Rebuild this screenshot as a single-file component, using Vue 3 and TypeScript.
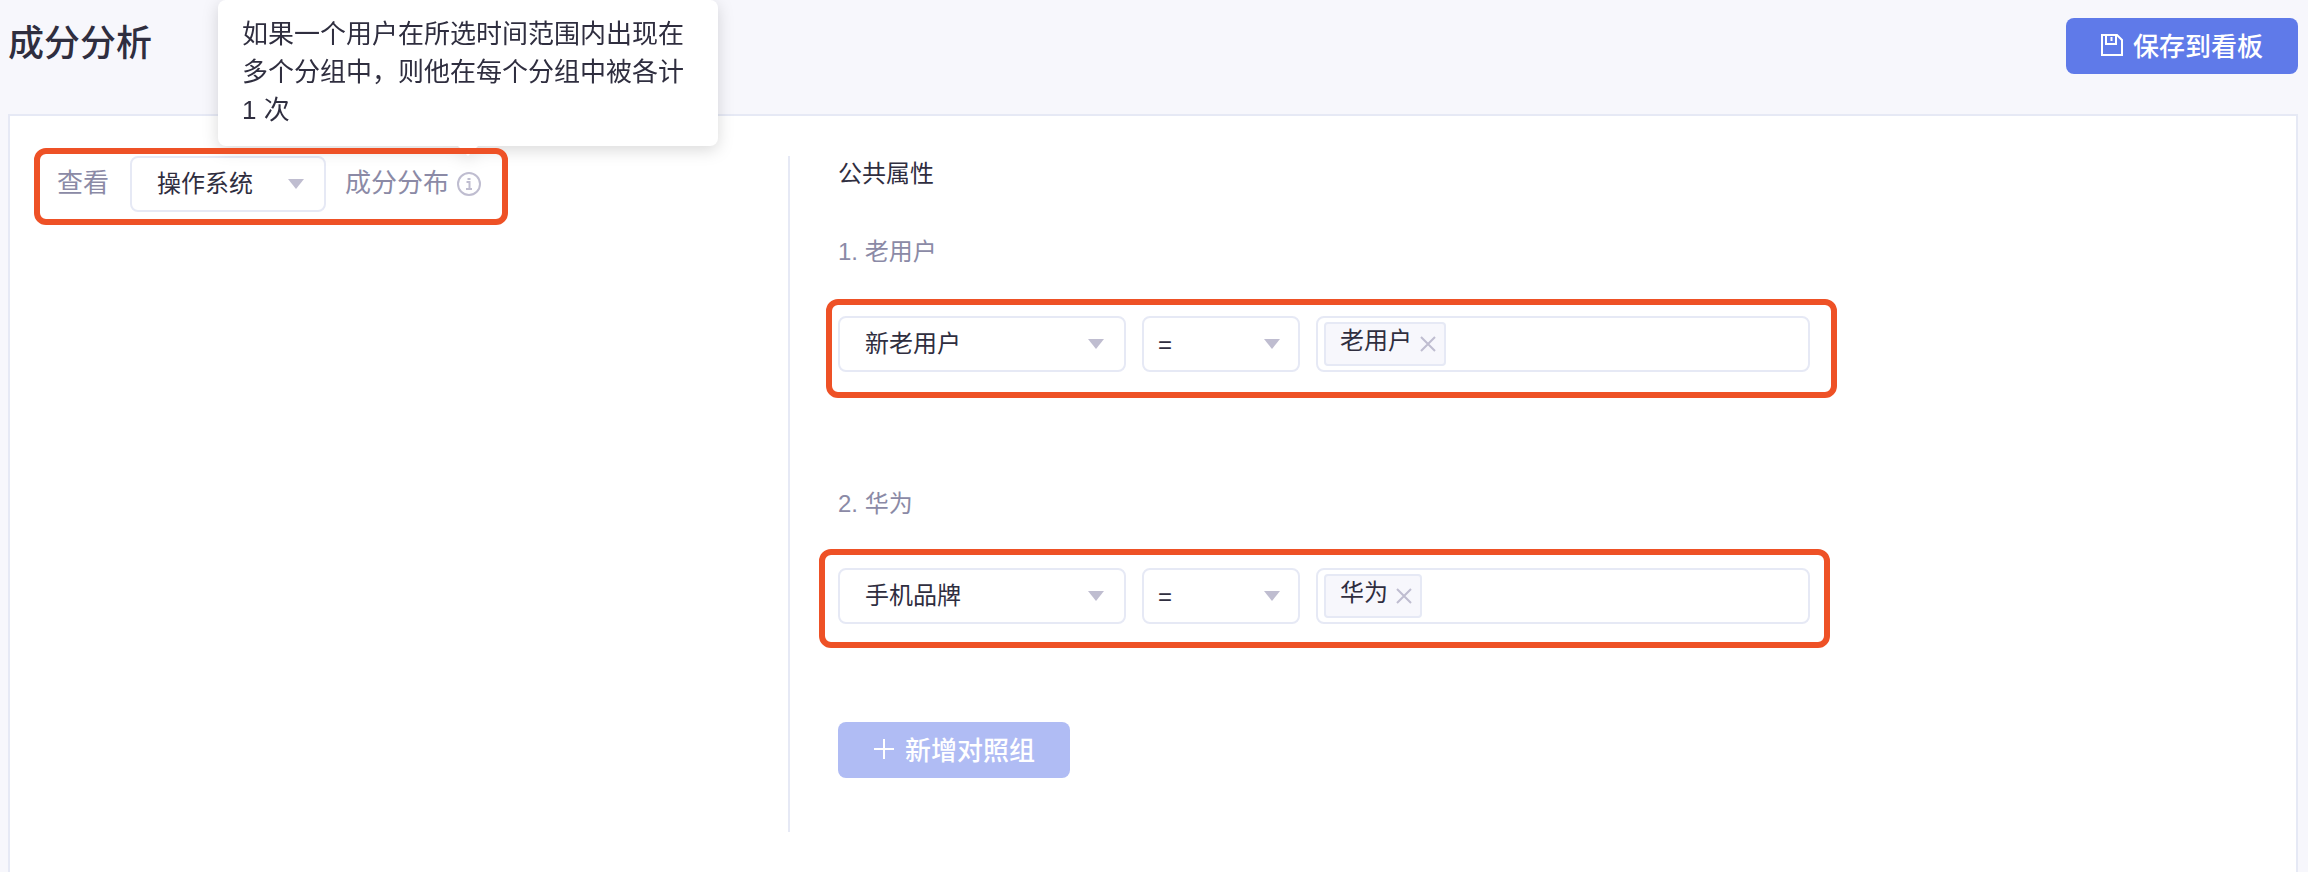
<script setup lang="ts">
import { ref } from 'vue'

interface Rule {
  id: number
  name: string
  field: string
  fields: string[]
  operator: string
  values: string[]
}

const dimension = ref('操作系统')
const dimensions = ['操作系统', '手机品牌', '新老用户']
const operators = ['=', '≠']

const rules = ref<Rule[]>([
  { id: 1, name: '老用户', field: '新老用户', fields: ['新老用户', '手机品牌'], operator: '=', values: ['老用户'] },
  { id: 2, name: '华为', field: '手机品牌', fields: ['新老用户', '手机品牌'], operator: '=', values: ['华为'] },
])

function removeValue(rule: Rule, value: string) {
  rule.values = rule.values.filter((v) => v !== value)
}
</script>

<template>
  <div class="page">
    <header class="header">
      <h1 class="title">成分分析</h1>
      <button type="button" class="btn">
        <svg class="save-icon" viewBox="0 0 22 22" aria-hidden="true">
          <path d="M1 1H16L21 6V21H1Z M5 1V10H15V1 M10.500 3V7" />
        </svg>
        <span class="btn-text">保存到看板</span>
      </button>
    </header>

    <main class="panel">
      <section class="view">
        <div class="view-row mark mark-view">
          <label class="view-text" for="dimension">查看</label>
          <span class="select view-select">
            <select id="dimension" v-model="dimension">
              <option v-for="d in dimensions" :key="d">{{ d }}</option>
            </select>
          </span>
          <span class="view-text">成分分布</span>
          <span class="info" aria-describedby="count-tip">
            <svg viewBox="0 0 24 24" aria-hidden="true">
              <circle cx="12" cy="12" r="11" />
              <path d="M9.500 10H12.500V17 M9 17H15" />
              <rect x="10.500" y="6" width="3" height="2" />
            </svg>
            <span id="count-tip" class="tooltip" role="tooltip">如果一个用户在所选时间范围内出现在多个分组中，则他在每个分组中被各计 1 次</span>
          </span>
        </div>
      </section>

      <section class="groups">
        <h2 class="heading">公共属性</h2>
        <div v-for="(rule, i) in rules" :key="rule.id" class="group">
          <h3 class="group-name">{{ i + 1 }}. {{ rule.name }}</h3>
          <div class="rule mark" :class="i === 0 ? 'mark-first' : 'mark-second'">
            <span class="select field">
              <select v-model="rule.field" :aria-label="`${rule.name} 属性`">
                <option v-for="f in rule.fields" :key="f">{{ f }}</option>
              </select>
            </span>
            <span class="select operator">
              <select v-model="rule.operator" :aria-label="`${rule.name} 条件`">
                <option v-for="o in operators" :key="o">{{ o }}</option>
              </select>
            </span>
            <div class="values">
              <span v-for="value in rule.values" :key="value" class="tag">
                <span>{{ value }}</span>
                <button type="button" class="remove" :aria-label="`移除 ${value}`" @click="removeValue(rule, value)">
                  <svg viewBox="0 0 16 16" aria-hidden="true"><path d="M1 1L15 15M15 1L1 15" /></svg>
                </button>
              </span>
              <input type="text" class="value-input" :aria-label="`${rule.name} 属性值`" />
            </div>
          </div>
        </div>
        <button type="button" class="btn btn-add" disabled>
          <svg class="plus-icon" viewBox="0 0 22 22" aria-hidden="true"><path d="M11 1V21M1 11H21" /></svg>
          <span class="btn-text">新增对照组</span>
        </button>
      </section>
    </main>
  </div>
</template>

<style>
body {
  margin: 0;
  background: #f7f7fc;
}
</style>

<style scoped>
.page,
.page * {
  box-sizing: border-box;
}

.page {
  display: flex;
  flex-direction: column;
  min-height: 100vh;
  padding: 18px 10px 0 8px;
  color: #2f2e3f;
  font-family: "Liberation Sans", "Noto Sans CJK SC", sans-serif;
  font-size: 24px;
  line-height: 36px;
}

.page select,
.page input,
.page button {
  font-family: inherit;
  color: inherit;
}

.header {
  display: flex;
  justify-content: space-between;
  align-items: flex-start;
  padding-bottom: 40px;
}

.title {
  margin: 0;
  font-size: 36px;
  font-weight: 500;
  line-height: 52px;
}

.page .btn {
  display: flex;
  align-items: center;
  justify-content: center;
  gap: 10px;
  width: 232px;
  height: 56px;
  padding: 0 0 2px;
  border: 0;
  border-radius: 8px;
  background: #5f7ae9;
  color: #fff;
  font-size: 26px;
  font-weight: 500;
}

.btn-text {
  padding-bottom: 2px;
}

.page .btn-add {
  margin-top: 98px;
  background: #b0bcf4;
}

.save-icon,
.plus-icon {
  width: 22px;
  height: 22px;
  fill: none;
  stroke: currentColor;
  stroke-width: 2;
}

.panel {
  flex: 1;
  display: grid;
  grid-template-columns: minmax(0, 778fr) minmax(0, 1508fr);
  padding: 40px 0;
  border: 2px solid #e6e9f5;
  border-bottom: 0;
  background: #fff;
}

.view {
  padding-left: 47px;
}

.view-row {
  display: flex;
  align-items: center;
  width: fit-content;
  color: #8b8aa6;
  font-size: 26px;
}

.view-text {
  padding-bottom: 2px;
}

.view-select {
  width: 196px;
  margin: 0 19px 0 21px;
}

.info {
  position: relative;
  width: 24px;
  height: 24px;
  margin-left: 8px;
}

.info svg {
  display: block;
  fill: none;
  stroke: #bfbdd0;
  stroke-width: 2;
}

.info rect {
  fill: #bfbdd0;
  stroke: none;
}

.tooltip {
  position: absolute;
  z-index: 2;
  bottom: 50px;
  left: 50%;
  width: 500px;
  margin-left: -251px;
  padding: 15px 24px 17px;
  border-radius: 8px;
  background: #fff;
  filter: drop-shadow(0 4px 8px rgba(0, 0, 0, 0.15));
  color: #2f2e3f;
  line-height: 38px;
}

.tooltip::after {
  content: "";
  position: absolute;
  top: 100%;
  left: 50%;
  margin-left: -10px;
  border: 10px solid transparent;
  border-top-color: #fff;
}

/* Orange callout drawn around a row of controls */
.mark {
  position: relative;
}

.mark::after {
  content: "";
  position: absolute;
  z-index: 3;
  border: 6px solid #ee5126;
  border-radius: 12px;
  pointer-events: none;
}

.mark-view::after {
  inset: -8px -27px -13px -23px;
}

.mark-first::after {
  inset: -17px -27px -26px -12px;
}

.mark-second::after {
  inset: -19px -20px -24px -19px;
}

.groups {
  padding-left: 48px;
  border-left: 2px solid #e6e9f5;
}

.heading,
.group-name {
  margin: 0;
  font-size: 24px;
  font-weight: 400;
}

.heading {
  margin-bottom: 42px;
}

.group + .group {
  margin-top: 114px;
}

.group-name {
  margin-bottom: 46px;
  color: #8b8aa6;
}

.rule {
  display: flex;
  gap: 16px;
  width: fit-content;
  max-width: 100%;
}

.select {
  position: relative;
  height: 56px;
}

.select::after {
  content: "";
  position: absolute;
  top: 23px;
  right: 22px;
  border: solid transparent;
  border-width: 10px 8px 0;
  border-top-color: #bfbdd0;
  pointer-events: none;
}

.select select {
  display: block;
  appearance: none;
  width: 100%;
  height: 100%;
  padding: 0 44px 2px 25px;
  border: 2px solid #e6e9f5;
  border-radius: 8px;
  background: #fff;
  color: #2f2e3f;
  font-size: 24px;
}

.field {
  width: 288px;
}

.operator {
  width: 158px;
}

.operator::after {
  right: 20px;
}

.operator select {
  padding: 0 40px 0 14px;
}

.values {
  display: flex;
  align-items: center;
  width: 494px;
  height: 56px;
  padding: 0 6px;
  border: 2px solid #e6e9f5;
  border-radius: 8px;
  background: #fff;
}

.tag {
  display: flex;
  gap: 8px;
  height: 44px;
  padding: 0 8px 0 14px;
  border: 2px solid #e6e9f5;
  border-radius: 4px;
  background: #f7f7fc;
  line-height: 34px;
}

.remove {
  display: flex;
  align-items: center;
  width: 16px;
  height: 40px;
  padding: 0;
  border: 0;
  background: none;
}

.remove svg {
  width: 16px;
  height: 16px;
  fill: none;
  stroke: #bfbdd0;
  stroke-width: 2;
}

.value-input {
  flex: 1;
  min-width: 0;
  height: 40px;
  padding: 0 8px;
  border: 0;
  background: none;
  font-size: 24px;
  outline: 0;
}
</style>
